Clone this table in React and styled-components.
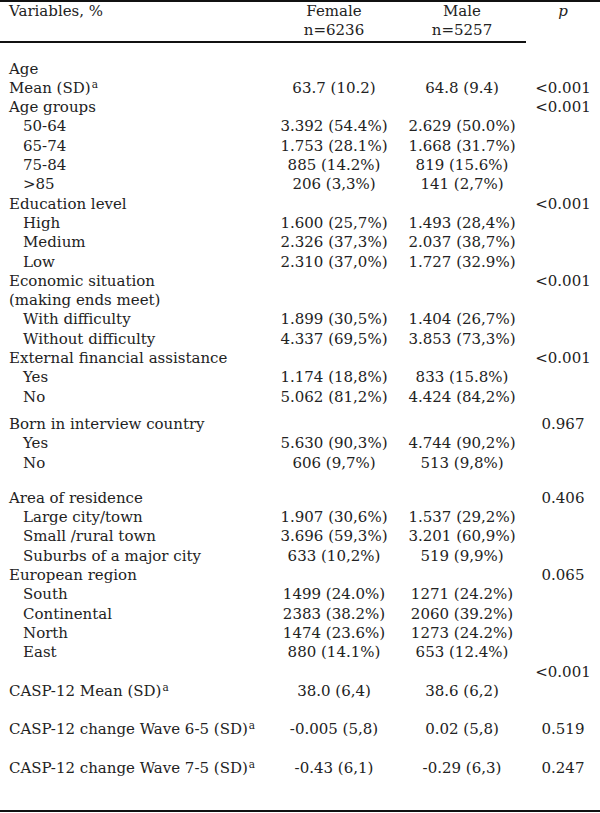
import React from 'react';
import styled, { createGlobalStyle } from 'styled-components';

const GlobalStyle = createGlobalStyle`
  html, body {
    margin: 0;
    padding: 0;
    background: #ffffff;
  }
`;

const Sheet = styled.div`
  width: 600px;
  height: 813px;
  box-sizing: border-box;
  font-family: 'DejaVu Serif', 'Liberation Serif', serif;
  font-size: 15px;
  line-height: 19.3px;
  color: #222;
  background: #fff;
`;

const Frame = styled.div`
  border-top: 2px solid #111;
  border-bottom: 2px solid #111;
  height: 812px;
  box-sizing: border-box;
  display: flex;
  flex-direction: column;
`;

const Head = styled.div`
  display: flex;
`;

const HeadCols = styled.div`
  width: 526px;
  display: grid;
  grid-template-columns: 270px 128px 128px;
  border-bottom: 2px solid #111;
`;

const HeadCell = styled.div`
  padding-left: ${(p) => (p.$left ? '9px' : '0')};
  text-align: ${(p) => (p.$left ? 'left' : 'center')};
  white-space: nowrap;
`;

const PHead = styled.div`
  width: 74px;
  text-align: center;
  font-style: italic;
`;

const Body = styled.div`
  padding-top: 17px;
  display: flex;
  flex-direction: column;
`;

const Row = styled.div`
  display: grid;
  grid-template-columns: 270px 128px 128px 74px;
  margin-top: ${(p) => p.$space || 0}px;
  white-space: nowrap;
`;

const Label = styled.div`
  padding-left: ${(p) => (p.$indent ? 23 : 9)}px;
`;

const Value = styled.div`
  text-align: center;
`;

const Sup = styled.sup`
  font-size: 10.5px;
  line-height: 0;
  vertical-align: 5px;
  margin-left: 1px;
`;

const rows = [
  { label: 'Age' },
  { label: 'Mean (SD)', sup: true, f: '63.7 (10.2)', m: '64.8 (9.4)', p: '<0.001' },
  { label: 'Age groups', p: '<0.001' },
  { label: '50-64', indent: true, f: '3.392 (54.4%)', m: '2.629 (50.0%)' },
  { label: '65-74', indent: true, f: '1.753 (28.1%)', m: '1.668 (31.7%)' },
  { label: '75-84', indent: true, f: '885 (14.2%)', m: '819 (15.6%)' },
  { label: '>85', indent: true, f: '206 (3,3%)', m: '141 (2,7%)' },
  { label: 'Education level', p: '<0.001' },
  { label: 'High', indent: true, f: '1.600 (25,7%)', m: '1.493 (28,4%)' },
  { label: 'Medium', indent: true, f: '2.326 (37,3%)', m: '2.037 (38,7%)' },
  { label: 'Low', indent: true, f: '2.310 (37,0%)', m: '1.727 (32.9%)' },
  { label: 'Economic situation', p: '<0.001' },
  { label: '(making ends meet)' },
  { label: 'With difficulty', indent: true, f: '1.899 (30,5%)', m: '1.404 (26,7%)' },
  { label: 'Without difficulty', indent: true, f: '4.337 (69,5%)', m: '3.853 (73,3%)' },
  { label: 'External financial assistance', p: '<0.001' },
  { label: 'Yes', indent: true, f: '1.174 (18,8%)', m: '833 (15.8%)' },
  { label: 'No', indent: true, f: '5.062 (81,2%)', m: '4.424 (84,2%)' },
  { label: 'Born in interview country', p: '0.967', space: 8 },
  { label: 'Yes', indent: true, f: '5.630 (90,3%)', m: '4.744 (90,2%)' },
  { label: 'No', indent: true, f: '606 (9,7%)', m: '513 (9,8%)' },
  { label: 'Area of residence', p: '0.406', space: 16 },
  { label: 'Large city/town', indent: true, f: '1.907 (30,6%)', m: '1.537 (29,2%)' },
  { label: 'Small /rural town', indent: true, f: '3.696 (59,3%)', m: '3.201 (60,9%)' },
  { label: 'Suburbs of a major city', indent: true, f: '633 (10,2%)', m: '519 (9,9%)' },
  { label: 'European region', p: '0.065' },
  { label: 'South', indent: true, f: '1499 (24.0%)', m: '1271 (24.2%)' },
  { label: 'Continental', indent: true, f: '2383 (38.2%)', m: '2060 (39.2%)' },
  { label: 'North', indent: true, f: '1474 (23.6%)', m: '1273 (24.2%)' },
  { label: 'East', indent: true, f: '880 (14.1%)', m: '653 (12.4%)' },
  { label: '', p: '<0.001' },
  { label: 'CASP-12 Mean (SD)', sup: true, f: '38.0 (6,4)', m: '38.6 (6,2)' },
  { label: 'CASP-12 change Wave 6-5 (SD)', sup: true, f: '-0.005 (5,8)', m: '0.02 (5,8)', p: '0.519', space: 19.3 },
  { label: 'CASP-12 change Wave 7-5 (SD)', sup: true, f: '-0.43 (6,1)', m: '-0.29 (6,3)', p: '0.247', space: 19.3 },
];

export default function App() {
  return (
    <Sheet>
      <GlobalStyle />
      <Frame>
        <Head>
          <HeadCols>
            <HeadCell $left>Variables, %</HeadCell>
            <HeadCell>
              Female
              <br />
              n=6236
            </HeadCell>
            <HeadCell>
              Male
              <br />
              n=5257
            </HeadCell>
          </HeadCols>
          <PHead>p</PHead>
        </Head>
        <Body>
          {rows.map((row, i) => (
            <Row key={i} $space={row.space}>
              <Label $indent={row.indent}>
                {row.label}
                {row.sup && <Sup>a</Sup>}
              </Label>
              <Value>{row.f}</Value>
              <Value>{row.m}</Value>
              <Value>{row.p}</Value>
            </Row>
          ))}
        </Body>
      </Frame>
    </Sheet>
  );
}
